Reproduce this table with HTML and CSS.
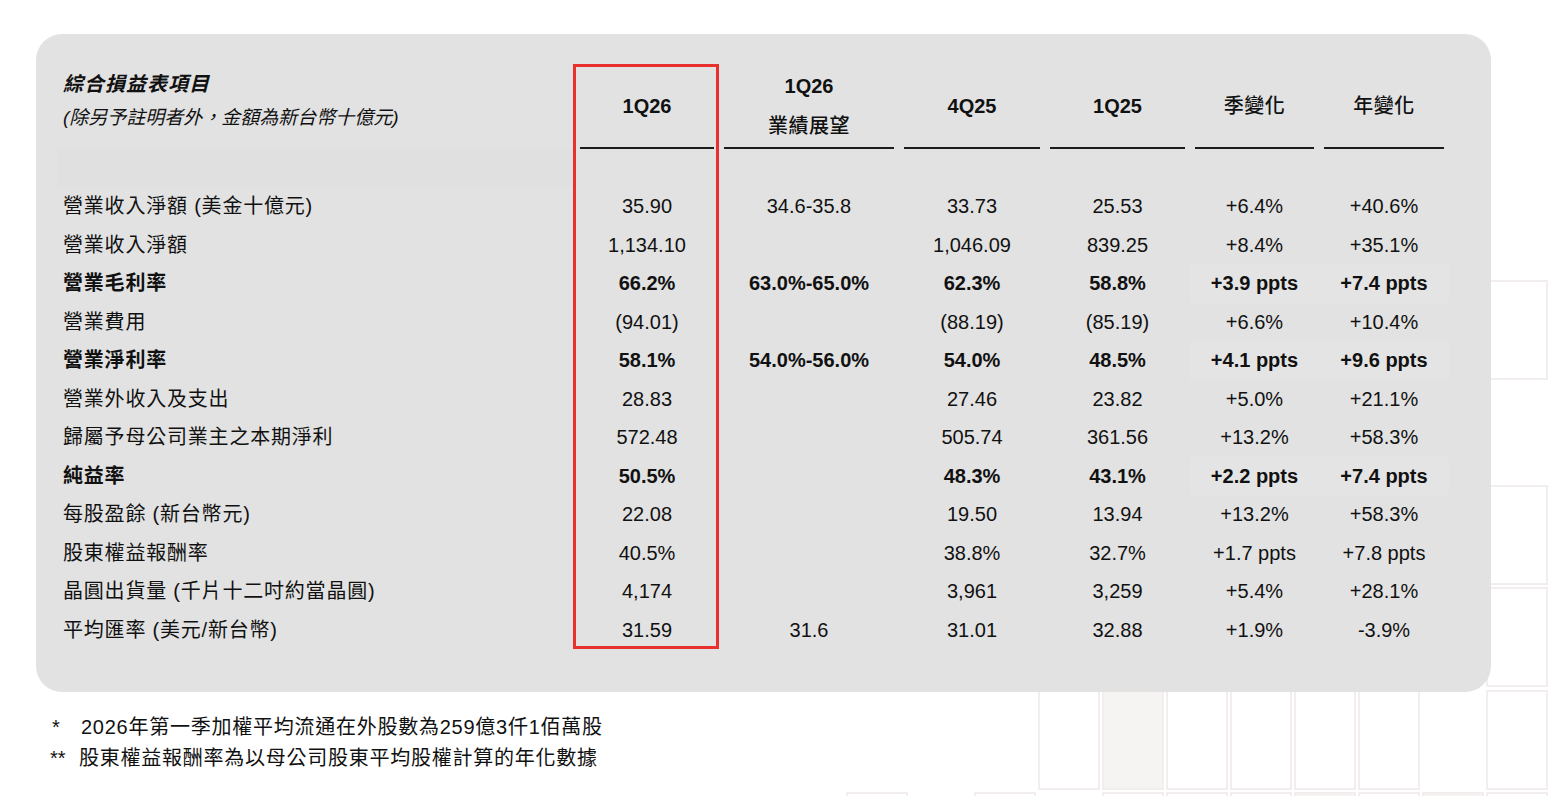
FILE: index.html
```html
<!DOCTYPE html>
<html lang="zh-Hant">
<head>
<meta charset="utf-8">
<title>綜合損益表項目</title>
<link rel="stylesheet" href="styles.css">
</head>
<body>
<div class="deco" aria-hidden="true">
  <div></div><div></div><div></div><div></div><div></div><div></div><div></div><div></div><div></div><div></div><div class="on"></div>
  <div></div><div></div><div></div><div></div><div></div><div></div><div></div><div></div><div></div><div></div><div></div>
  <div></div><div></div><div></div><div></div><div></div><div></div><div></div><div></div><div></div><div></div><div class="on"></div>
  <div></div><div></div><div></div><div></div><div></div><div></div><div></div><div></div><div></div><div></div><div class="on"></div>
  <div></div><div></div><div></div><div class="on"></div><div class="on fill"></div><div class="on"></div><div class="on"></div><div class="on"></div><div class="on"></div><div></div><div class="on"></div>
  <div class="on"></div><div></div><div class="on"></div><div></div><div class="on"></div><div class="on"></div><div class="on"></div><div class="on fill"></div><div class="on"></div><div class="on fill"></div><div class="on"></div>
</div>

<main class="card">
  <div class="tablewrap">
    <table class="fin">
      <colgroup>
        <col class="c-label"><col class="c-a"><col class="c-b"><col class="c-c"><col class="c-d"><col class="c-e"><col class="c-f">
      </colgroup>
      <thead>
        <tr>
          <th class="title-cell">
            <div class="title">綜合損益表項目</div>
            <div class="subtitle">(除另予註明者外，金額為新台幣十億元)</div>
          </th>
          <th><div class="hc">1Q26</div></th>
          <th><div class="hc">1Q26<span class="cjk">業績展望</span></div></th>
          <th><div class="hc">4Q25</div></th>
          <th><div class="hc">1Q25</div></th>
          <th><div class="hc"><span class="cjk">季變化</span></div></th>
          <th><div class="hc"><span class="cjk">年變化</span></div></th>
        </tr>
        <tr class="spacer"><td class="band"></td><td></td><td></td><td></td><td></td><td></td><td></td></tr>
      </thead>
      <tbody>
        <tr><td>營業收入淨額 (美金十億元)</td><td>35.90</td><td>34.6-35.8</td><td>33.73</td><td>25.53</td><td>+6.4%</td><td>+40.6%</td></tr>
        <tr><td>營業收入淨額</td><td>1,134.10</td><td></td><td>1,046.09</td><td>839.25</td><td>+8.4%</td><td>+35.1%</td></tr>
        <tr class="bold"><td>營業毛利率</td><td>66.2%</td><td>63.0%-65.0%</td><td>62.3%</td><td>58.8%</td><td class="hl">+3.9 ppts</td><td class="hl">+7.4 ppts</td></tr>
        <tr><td>營業費用</td><td>(94.01)</td><td></td><td>(88.19)</td><td>(85.19)</td><td>+6.6%</td><td>+10.4%</td></tr>
        <tr class="bold"><td>營業淨利率</td><td>58.1%</td><td>54.0%-56.0%</td><td>54.0%</td><td>48.5%</td><td class="hl">+4.1 ppts</td><td class="hl">+9.6 ppts</td></tr>
        <tr><td>營業外收入及支出</td><td>28.83</td><td></td><td>27.46</td><td>23.82</td><td>+5.0%</td><td>+21.1%</td></tr>
        <tr><td>歸屬予母公司業主之本期淨利</td><td>572.48</td><td></td><td>505.74</td><td>361.56</td><td>+13.2%</td><td>+58.3%</td></tr>
        <tr class="bold"><td>純益率</td><td>50.5%</td><td></td><td>48.3%</td><td>43.1%</td><td class="hl">+2.2 ppts</td><td class="hl">+7.4 ppts</td></tr>
        <tr><td>每股盈餘 (新台幣元)</td><td>22.08</td><td></td><td>19.50</td><td>13.94</td><td>+13.2%</td><td>+58.3%</td></tr>
        <tr><td>股東權益報酬率</td><td>40.5%</td><td></td><td>38.8%</td><td>32.7%</td><td>+1.7 ppts</td><td>+7.8 ppts</td></tr>
        <tr><td>晶圓出貨量 (千片十二吋約當晶圓)</td><td>4,174</td><td></td><td>3,961</td><td>3,259</td><td>+5.4%</td><td>+28.1%</td></tr>
        <tr><td>平均匯率 (美元/新台幣)</td><td>31.59</td><td>31.6</td><td>31.01</td><td>32.88</td><td>+1.9%</td><td>-3.9%</td></tr>
      </tbody>
    </table>
    <div class="highlight" aria-hidden="true"></div>
  </div>
</main>

<section class="notes">
  <p class="note"><span class="mark">*</span><span class="ntext">2026年第一季加權平均流通在外股數為259億3仟1佰萬股</span></p>
  <p class="note"><span class="mark m2">**</span><span class="ntext">股東權益報酬率為以母公司股東平均股權計算的年化數據</span></p>
</section>
</body>
</html>
```

FILE: styles.css
```css
* { box-sizing: border-box; }

html, body {
  margin: 0;
  padding: 0;
  background: #ffffff;
}

body {
  font-family: "Liberation Sans", "Noto Sans CJK TC", Arial, sans-serif;
  color: #111111;
  width: 1553px;
  height: 796px;
  overflow: hidden;
  position: relative;
  padding-top: 34px;
}

/* faint decorative grid behind the card */
.deco {
  position: absolute;
  left: 846px;
  top: 280px;
  height: 516px;
  overflow: hidden;
  display: grid;
  grid-template-columns: repeat(11, 62px);
  grid-auto-rows: 100px;
  column-gap: 2px;
  row-gap: 2.4px;
  z-index: 0;
}
.deco > div { border: 2px solid transparent; }
.deco > .on { border-color: #f1eeed; }
.deco > .fill { background: #f5f4f3; }

.card {
  position: relative;
  z-index: 1;
  margin-left: 36px;
  width: 1455px;
  height: 658px;
  background: #e2e2e2;
  border-radius: 26px;
  padding: 30px 0 0 21px;
}

.tablewrap {
  position: relative;
  width: 1392px;
}

.fin {
  width: 1392px;
  table-layout: fixed;
  border-collapse: collapse;
  font-size: 20px;
}

.c-label { width: 518px; }
.c-a { width: 144px; }
.c-b { width: 180px; }
.c-c { width: 146px; }
.c-d { width: 145px; }
.c-e { width: 129px; }
.c-f { width: 130px; }

.fin th {
  padding: 0;
  font-weight: 700;
  vertical-align: top;
}

.hc {
  height: 85px;
  margin: 0 5px;
  border-bottom: 2px solid #1c1c1c;
  display: flex;
  flex-direction: column;
  justify-content: center;
  align-items: center;
  line-height: 40px;
  padding-top: 1px;
}

.cjk {
  font-weight: 500;
  letter-spacing: 0.5px;
}

.title-cell {
  text-align: left;
  padding: 3px 0 0 6px !important;
}

.title {
  font-style: italic;
  font-weight: 700;
  font-size: 20px;
  letter-spacing: 1px;
  line-height: 34px;
}

.subtitle {
  font-style: italic;
  font-weight: 400;
  font-size: 19px;
  line-height: 34px;
}

.spacer td {
  height: 38px;
  padding: 0;
}

.spacer .band {
  background: #e0e0e0;
}

.fin tbody td {
  height: 38.5px;
  padding: 0;
  text-align: center;
  vertical-align: middle;
  white-space: nowrap;
  line-height: 24px;
}

.fin tbody td:first-child {
  text-align: left;
  padding-left: 6px;
  letter-spacing: 0.8px;
}

.fin tbody tr.bold td {
  font-weight: 700;
}

.fin tbody td.hl {
  background: #e4e4e4;
}

.highlight {
  position: absolute;
  left: 516px;
  top: 0;
  width: 146px;
  height: 585px;
  border: 3px solid #e8302e;
  pointer-events: none;
}

.notes {
  margin: 20px 0 0 50px;
  font-size: 20px;
  line-height: 31px;
}

.note {
  margin: 0;
  display: flex;
}

.ntext {
  letter-spacing: 0.75px;
}

.mark {
  display: inline-block;
  width: 31px;
  padding-left: 2px;
}

.mark.m2 {
  width: 29px;
  padding-left: 0;
}
```
